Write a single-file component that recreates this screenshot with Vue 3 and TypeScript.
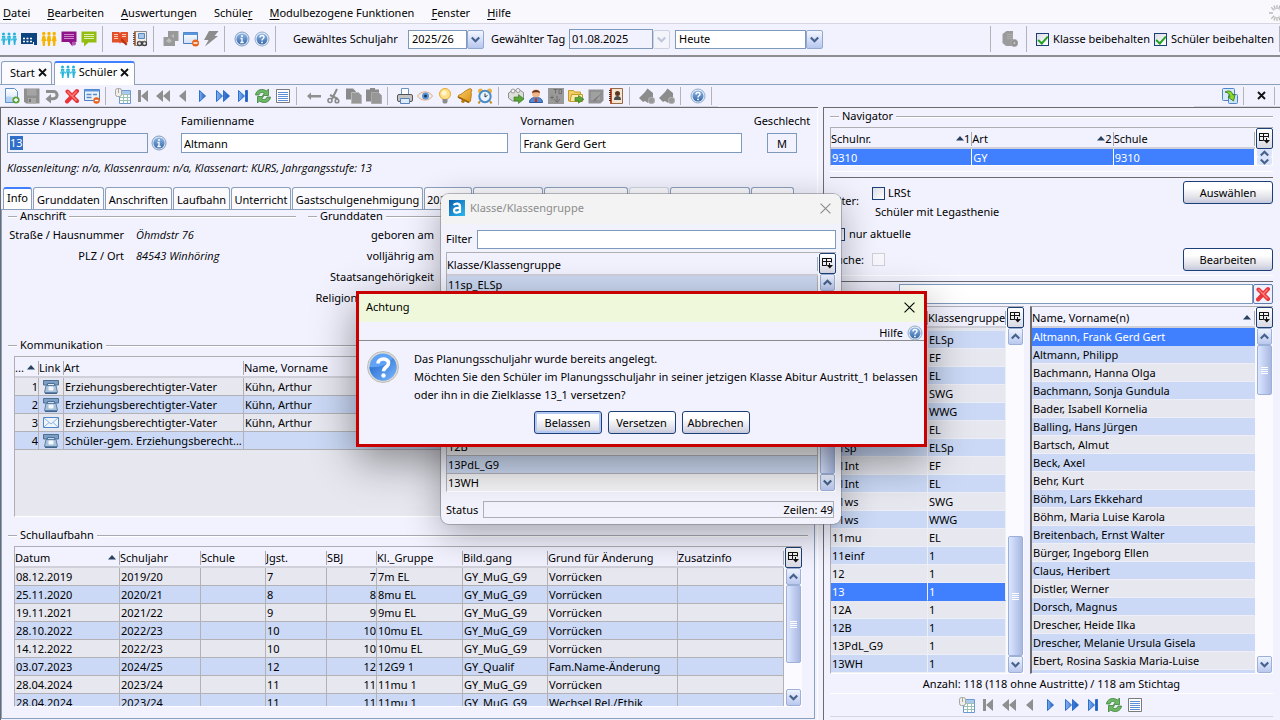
<script setup lang="ts">
import { ref } from 'vue'

interface Tab { label: string; width: number; disabled?: boolean }
interface Column { label: string; width?: number; sort?: string; right?: boolean }

const menus: [string, string, string][] = [
  ['', 'D', 'atei'],
  ['', 'B', 'earbeiten'],
  ['', 'A', 'uswertungen'],
  ['Schüle', 'r', ''],
  ['', 'M', 'odulbezogene Funktionen'],
  ['', 'F', 'enster'],
  ['', 'H', 'ilfe'],
]

const mainTools = [
  ['people-c', 'board', 'people-y', 'screen', 'chat'],
  ['book', 'notebook'],
  ['puzzle', 'window', 'bolt'],
  ['info', 'help'],
]

const editTools = [
  ['new', 'save', 'undo', 'delete', 'form'],
  ['calendar', 'first', 'rewind', 'prev', 'next', 'forward', 'last', 'refresh', 'list'],
  ['back', 'cut', 'copy', 'paste'],
  ['print', 'eye', 'bulb', 'bell', 'clock'],
  ['printout', 'person', 'tb', 'folder', 'note', 'contacts'],
  ['ticket', 'ticket'],
  ['help'],
]
const navTools = editTools[1]

const tabs: Tab[] = [
  { label: 'Info', width: 29 },
  { label: 'Grunddaten', width: 71 },
  { label: 'Anschriften', width: 67 },
  { label: 'Laufbahn', width: 57 },
  { label: 'Unterricht', width: 60 },
  { label: 'Gastschulgenehmigung', width: 131 },
  { label: '2025/26', width: 48 },
  { label: '', width: 70 },
  { label: '', width: 84 },
  { label: '', width: 40, disabled: true },
  { label: '', width: 80 },
  { label: '', width: 43 },
]

const contactCols: Column[] = [
  { label: '...', width: 24, sort: ' ', right: true },
  { label: 'Link', width: 25 },
  { label: 'Art', width: 180 },
  { label: 'Name, Vorname', width: 200 },
  { label: '' },
]
const contacts = [
  { nr: 1, icon: 'phone', art: 'Erziehungsberechtigter-Vater', name: 'Kühn, Arthur' },
  { nr: 2, icon: 'phone', art: 'Erziehungsberechtigter-Vater', name: 'Kühn, Arthur' },
  { nr: 3, icon: 'mail', art: 'Erziehungsberechtigter-Vater', name: 'Kühn, Arthur' },
  { nr: 4, icon: 'phone', art: 'Schüler-gem. Erziehungsberecht...', name: '' },
]

const careerCols: Column[] = [
  { label: 'Datum', width: 105, sort: ' ' },
  { label: 'Schuljahr', width: 81 },
  { label: 'Schule', width: 65 },
  { label: 'Jgst.', width: 61 },
  { label: 'SBJ', width: 50, right: true },
  { label: 'Kl._Gruppe', width: 86 },
  { label: 'Bild.gang', width: 85 },
  { label: 'Grund für Änderung', width: 130 },
  { label: 'Zusatzinfo' },
]
const career = [
  ['08.12.2019', '2019/20', '', '7', '7', '7m EL', 'GY_MuG_G9', 'Vorrücken', ''],
  ['25.11.2020', '2020/21', '', '8', '8', '8mu EL', 'GY_MuG_G9', 'Vorrücken', ''],
  ['19.11.2021', '2021/22', '', '9', '9', '9mu EL', 'GY_MuG_G9', 'Vorrücken', ''],
  ['28.10.2022', '2022/23', '', '10', '10', '10mu EL', 'GY_MuG_G9', 'Vorrücken', ''],
  ['14.12.2022', '2022/23', '', '10', '10', '10mu EL', 'GY_MuG_G9', 'Vorrücken', ''],
  ['03.07.2023', '2024/25', '', '12', '12', '12G9 1', 'GY_Qualif', 'Fam.Name-Änderung', ''],
  ['28.04.2024', '2023/24', '', '11', '11', '11mu 1', 'GY_MuG_G9', 'Vorrücken', ''],
  ['28.04.2024', '2023/24', '', '11', '11', '11mu 1', 'GY_MuG_G9', 'Wechsel Rel./Ethik', ''],
]

const classes = [
  ['10sp', 'ELSp'], ['10Int', 'EF'], ['10Int', 'EL'], ['10ws', 'SWG'], ['10ws', 'WWG'], ['10mu', 'EL'],
  ['11sp', 'ELSp'], ['11Int', 'EF'], ['11Int', 'EL'], ['11ws', 'SWG'], ['11ws', 'WWG'], ['11mu', 'EL'],
  ['11einf', '1'], ['12', '1'], ['13', '1'], ['12A', '1'], ['12B', '1'], ['13PdL_G9', '1'], ['13WH', '1'],
]
const selectedClass = ref('13')

const students = [
  'Altmann, Frank Gerd Gert', 'Altmann, Philipp', 'Bachmann, Hanna Olga', 'Bachmann, Sonja Gundula',
  'Bader, Isabell Kornelia', 'Balling, Hans Jürgen', 'Bartsch, Almut', 'Beck, Axel', 'Behr, Kurt',
  'Böhm, Lars Ekkehard', 'Böhm, Maria Luise Karola', 'Breitenbach, Ernst Walter', 'Bürger, Ingeborg Ellen',
  'Claus, Heribert', 'Distler, Werner', 'Dorsch, Magnus', 'Drescher, Heide Ilka',
  'Drescher, Melanie Ursula Gisela', 'Ebert, Rosina Saskia Maria-Luise', '',
]
const selectedStudent = ref(0)

const groups = [
  '11sp_ELSp', '11Int_EF', '11Int_EL', '11ws_SWG', '11ws_WWG', '11mu_EL',
  '11einf_1', '12', '12A', '12B', '13PdL_G9', '13WH',
]
</script>

<template>
  <svg class="sprite" width="0" height="0" aria-hidden="true">
    <defs>
      <linearGradient id="gBlue" x1="0" y1="0" x2="0" y2="1">
        <stop offset="0" stop-color="#8fb8e8" /><stop offset="1" stop-color="#3567a8" />
      </linearGradient>
      <linearGradient id="gSky" x1="0" y1="0" x2="1" y2="1">
        <stop offset="0" stop-color="#0b5fae" /><stop offset="1" stop-color="#2bb8f0" />
      </linearGradient>
      <linearGradient id="gPaper" x1="0" y1="0" x2="0" y2="1">
        <stop offset="0" stop-color="#ffffff" /><stop offset="1" stop-color="#cfe0f5" />
      </linearGradient>
      <linearGradient id="gPlay" x1="0" y1="0" x2="1" y2="0">
        <stop offset="0" stop-color="#7fb2f0" /><stop offset="1" stop-color="#1557b8" />
      </linearGradient>
      <linearGradient id="gAsk" x1="0" y1="0" x2="1" y2="1">
        <stop offset="0" stop-color="#1c62c8" /><stop offset="1" stop-color="#7ab8ff" />
      </linearGradient>
      <linearGradient id="gGold" x1="0" y1="0" x2="1" y2="1">
        <stop offset="0" stop-color="#fbd36b" /><stop offset="1" stop-color="#d98c12" />
      </linearGradient>
    </defs>
    <symbol id="people-c" viewBox="0 0 16 16">
      <g fill="#23b3d8">
        <circle cx="2.500" cy="3" r="1.500" /><circle cx="8" cy="3" r="1.500" /><circle cx="13.500" cy="3" r="1.500" />
        <path d="M.8 5h3.600L4 9.500 3.400 14H2l-.5-4.500zM6.200 5h3.600l-.4 4.500-.6 4.500H7.400l-.5-4.500zM11.700 5h3.600l-.4 4.500-.6 4.500h-1.400l-.5-4.500z" />
        <path d="M0 9.500L2.500 6.500 5.200 9 8 6.500 10.700 9l2.800-2.500L16 9" fill="none" stroke="#55c6e4" stroke-width="1.300" />
      </g>
    </symbol>
    <symbol id="people-y" viewBox="0 0 16 16">
      <g fill="#f5b400">
        <circle cx="2.800" cy="2.500" r="1.700" /><circle cx="8" cy="2.500" r="1.700" /><circle cx="13.200" cy="2.500" r="1.700" />
        <path d="M1.500 4.500h2.600L5.200 10h-1L3.800 15h-2L1.400 10h-1zM6.700 4.500h2.600L10.400 10h-1L9 15H7L6.600 10h-1zM11.900 4.500h2.600l1.100 5.500h-1l-.4 5h-2l-.4-5h-1z" />
      </g>
    </symbol>
    <symbol id="board" viewBox="0 0 16 16">
      <path d="M0 2h16v12h-3v-3h-1v2H0z" fill="#0d4480" />
      <path d="M2 7.500h9M2 10.500h9" stroke="#fff" stroke-width="1.500" stroke-dasharray="2 1.500" />
    </symbol>
    <symbol id="screen" viewBox="0 0 16 16">
      <path d="M.5.500h15V11h-4v4.500L8 11H.5z" fill="#8f148a" />
      <path d="M3 3.500h10M3 5.500h10M3 7.500h10" stroke="#cf86cc" />
      <circle cx="13" cy="12.500" r="2" fill="#b452b0" />
    </symbol>
    <symbol id="chat" viewBox="0 0 16 16">
      <path d="M.5.500h15v11h-8L3 15.500v-4H.5z" fill="#93bd10" />
      <path d="M3 3.500h10M3 5.500h10M3 7.500h10" stroke="#e2efb4" />
    </symbol>
    <symbol id="book" viewBox="0 0 16 16">
      <path d="M0 1h7l1 1 1-1h7v10l-3 1.500L9 11.500l-1 1-1-1H0z" fill="#e2502a" />
      <path d="M2 3.500h4M2 5.500h4M2 7.500h4M10 3.500h4M10 5.500h4" stroke="#ffc9b8" />
      <path d="M9.500 7l6 6-1.500 1.500L9 9.500z" fill="#b8310e" />
    </symbol>
    <symbol id="notebook" viewBox="0 0 16 16">
      <path d="M2.500.500h12v14h-12z" fill="#f3f0ec" stroke="#8a8a8a" />
      <path d="M2 .5h2v14H2z" fill="#b9714a" />
      <path d="M1 2.500h2M1 4.500h2M1 6.500h2M1 8.500h2M1 10.500h2M1 12.500h2" stroke="#555" />
      <path d="M6.500 2.500h6v5h-6z" fill="#a9c7ec" stroke="#5b87c0" />
      <circle cx="7.500" cy="12.500" r="2" fill="none" stroke="#444" stroke-width="1.300" /><circle cx="12.500" cy="12.500" r="2" fill="none" stroke="#444" stroke-width="1.300" /><path d="M6 10.500h8" stroke="#666" />
    </symbol>
    <symbol id="puzzle" viewBox="0 0 16 16">
      <path d="M5 0h10.500v10H12v5H.5V6H5z" fill="#999" />
      <path d="M3 10l3-3 3 3-3 2zM8 5l3-2v4z" fill="#bbb" />
    </symbol>
    <symbol id="window" viewBox="0 0 16 16">
      <path d="M.5 1.500h14v11H.5z" fill="url(#gPaper)" stroke="#4d7fc0" />
      <path d="M.5 1.500h14v2.500H.5z" fill="#5b95dc" />
      <circle cx="12.500" cy="12" r="3.500" fill="#e8641c" /><path d="M10.500 12h4" stroke="#fff" stroke-width="1.500" />
    </symbol>
    <symbol id="bolt" viewBox="0 0 16 16">
      <path d="M6 0h9.500l-4 5H15L2 15.500 5.500 9H1z" fill="#8c8c8c" />
    </symbol>
    <symbol id="info" viewBox="0 0 16 16">
      <circle cx="8" cy="8" r="7" fill="#dfe9f5" stroke="#7f9cc0" />
      <circle cx="8" cy="8" r="5.600" fill="url(#gBlue)" />
      <circle cx="8" cy="5" r="1" fill="#fff" /><path d="M6.500 7.500H8v3.500M6.300 11.500h3.500" fill="none" stroke="#fff" stroke-width="1.300" />
    </symbol>
    <symbol id="help" viewBox="0 0 16 16">
      <circle cx="8" cy="8" r="7" fill="#e6eef8" stroke="#93acca" />
      <circle cx="8" cy="8" r="5.500" fill="url(#gBlue)" />
      <path d="M6 6.500c0-2.700 4-2.700 4-.2C10 7.800 8 7.700 8 9.400" fill="none" stroke="#fff" stroke-width="1.400" /><circle cx="8" cy="11.400" r=".9" fill="#fff" />
    </symbol>
    <symbol id="new" viewBox="0 0 16 16">
      <path d="M1.500.500h9l3 3v11h-12z" fill="url(#gPaper)" stroke="#5d8fc9" />
      <path d="M2 9c4-1 7 0 11 2v3H2z" fill="#b4d2f3" />
      <circle cx="12" cy="12" r="3.600" fill="#5aa13a" /><path d="M12 10v4M10 12h4" stroke="#fff" stroke-width="1.300" />
    </symbol>
    <symbol id="save" viewBox="0 0 16 16">
      <path d="M0 .5h15.500v15H2l-2-2z" fill="#8f8f8f" /><path d="M3 1h9.500v6.500H3z" fill="#a4a4a4" /><path d="M4 10h8v5.500H4z" fill="#a8a8a8" /><path d="M5 11h2v3H5z" fill="#777" />
    </symbol>
    <symbol id="undo" viewBox="0 0 16 16">
      <path d="M2 3.500h7.500a3.600 3.600 0 0 1 0 7.200H6" fill="none" stroke="#8e8e8e" stroke-width="3" />
      <path d="M7 6v9.500L1.500 11z" fill="#8e8e8e" />
    </symbol>
    <symbol id="delete" viewBox="0 0 16 16">
      <path d="M3.500 3.500l9.500 9.500M13 3L3 13.500" stroke="#e8343a" stroke-width="4" stroke-linecap="round" />
      <path d="M3.500 3.500L12.500 12.500M12.500 3.500L8.500 7.500" stroke="#ff8078" stroke-width="1.400" />
    </symbol>
    <symbol id="form" viewBox="0 0 16 16">
      <path d="M.5 1.500h15v11H.5z" fill="#eaf2fc" stroke="#4d7fc0" /><path d="M.5 1.500h15v2H.5z" fill="#5b95dc" />
      <path d="M2.500 6.500h5M9 6.500h4M2.500 9.500h5" stroke="#5b8ac6" stroke-width="1.400" />
      <circle cx="12.500" cy="12.500" r="3.200" fill="#e8641c" /><path d="M10.800 12.500h3.500" stroke="#fff" stroke-width="1.300" />
    </symbol>
    <symbol id="calendar" viewBox="0 0 16 16">
      <path d="M4.500 2.500h11v13h-11z" fill="#fff" stroke="#6b9ad0" />
      <path d="M5 3h10v3H5z" fill="#a9c8ec" />
      <path d="M5 6.500h10M5 9.500h10M5 12.500h10M8.500 6v9M12.500 6v9" stroke="#9cc3b0" />
      <rect x=".5" y=".5" width="6" height="8" rx="2" fill="#efefea" stroke="#a5a5a0" /><path d="M3.500 1v4" stroke="#a5a5a0" />
    </symbol>
    <symbol id="first" viewBox="0 0 16 16"><path d="M3 2h3v12H3zM13 2v12L6 8z" fill="#8f8f8f" /></symbol>
    <symbol id="rewind" viewBox="0 0 16 16"><path d="M8 2v12L1 8zM15 2v12L8 8z" fill="#8f8f8f" /></symbol>
    <symbol id="prev" viewBox="0 0 16 16"><path d="M11 2v12L4 8z" fill="#8f8f8f" /></symbol>
    <symbol id="next" viewBox="0 0 16 16"><path d="M4.500 2.500l6 5.500-6 5.500z" fill="url(#gPlay)" stroke="#2f6fce" /></symbol>
    <symbol id="forward" viewBox="0 0 16 16"><path d="M1.500 2.500l6 5.500-6 5.500zM8.500 2.500l6 5.500-6 5.500z" fill="url(#gPlay)" stroke="#2f6fce" /></symbol>
    <symbol id="last" viewBox="0 0 16 16"><path d="M3.500 2.500l6 5.500-6 5.500zM10.500 2.500h2v11h-2z" fill="url(#gPlay)" stroke="#2f6fce" /></symbol>
    <symbol id="refresh" viewBox="0 0 16 16">
      <path d="M.5 7C1 1.500 7.500 0 11.500 3L13.500 1v6.500H7.500L9.300 5.200C7 3.800 4.500 4.500 4 7z" fill="#6cb765" stroke="#3d8238" stroke-width=".8" />
      <path d="M15.500 9C15 14.500 8.500 16 4.500 13L2.500 15V8.500h6L6.700 10.800C9 12.200 11.500 11.500 12 9z" fill="#6cb765" stroke="#3d8238" stroke-width=".8" />
    </symbol>
    <symbol id="list" viewBox="0 0 16 16">
      <path d="M1.500 1.500h13v13h-13z" fill="#fff" stroke="#7b7b7b" /><path d="M3 4.500h10M3 6.500h10M3 8.500h10M3 10.500h10M3 12.500h10" stroke="#5c8fd6" />
    </symbol>
    <symbol id="back" viewBox="0 0 16 16"><path d="M1 8l4-3.500V7h10v2.500H5V12z" fill="#8f8f8f" /></symbol>
    <symbol id="cut" viewBox="0 0 16 16">
      <path d="M11 1L6 11M4 7l8 4" stroke="#8a8a8a" stroke-width="2" /><circle cx="4" cy="12.500" r="2" fill="none" stroke="#8a8a8a" stroke-width="1.600" /><circle cx="11" cy="13" r="1.800" fill="none" stroke="#8a8a8a" stroke-width="1.600" />
    </symbol>
    <symbol id="copy" viewBox="0 0 16 16"><path d="M0 .5h7l3 3v8H0z" fill="#8a8a8a" /><path d="M5.500 4.500h7l3 3v8h-10z" fill="#979797" stroke="#b9b9b9" /></symbol>
    <symbol id="paste" viewBox="0 0 16 16"><path d="M0 1.500h4V0h5v1.500h4v12H0z" fill="#8a8a8a" /><path d="M5.500 4.500h7l3 3v8h-10z" fill="#979797" stroke="#a9a9a9" /></symbol>
    <symbol id="print" viewBox="0 0 16 16">
      <path d="M4.500.500h7v6h-7z" fill="#fff" stroke="#6a94c8" /><rect x=".5" y="6.500" width="15" height="7" rx="1.500" fill="#c4c4c4" stroke="#555" />
      <path d="M3.500 10.500h9v5h-9z" fill="#dcebfb" stroke="#5d83b4" />
    </symbol>
    <symbol id="eye" viewBox="0 0 16 16">
      <path d="M.5 8C4 2.500 12 2.500 15.500 8 12 13.500 4 13.500.500 8z" fill="#f2ede8" stroke="#d8ab89" /><circle cx="8.500" cy="8" r="3.500" fill="#5b93d6" /><circle cx="8.500" cy="8" r="1.600" fill="#183a68" />
    </symbol>
    <symbol id="bulb" viewBox="0 0 16 16">
      <circle cx="8" cy="6" r="5.500" fill="#fde08a" stroke="#e9a727" /><path d="M5.500 11h5v3l-1 1.500h-3L5.500 14z" fill="#8c8c8c" /><circle cx="7" cy="5" r="2.500" fill="#fff6cf" />
    </symbol>
    <symbol id="bell" viewBox="0 0 16 16">
      <path d="M11 1.500l2.500-1 1.500 1.500-1 2c1 3-.5 6.500-.5 9L12 14.500 1 9l.5-1.700C5 6.500 7.500 3 11 1.500z" fill="url(#gGold)" stroke="#b9770c" stroke-width=".9" />
      <path d="M1 9l11 5.500" stroke="#9a5f08" stroke-width="1.400" /><circle cx="6" cy="13.300" r="1.700" fill="#b9770c" />
    </symbol>
    <symbol id="clock" viewBox="0 0 16 16">
      <path d="M3 13l-1.500 2.500M13 13l1.500 2.500" stroke="#c48f2a" stroke-width="2" /><circle cx="3.500" cy="3" r="2.500" fill="#e9b23b" /><circle cx="12.500" cy="3" r="2.500" fill="#e9b23b" />
      <circle cx="8" cy="8.500" r="5.700" fill="#e9f3fd" stroke="#4a8ccb" stroke-width="2" /><path d="M8 5.500V9l2.500-1.500" fill="none" stroke="#333" />
    </symbol>
    <symbol id="printout" viewBox="0 0 16 16">
      <path d="M.5 5l4-2.500h8l3 2V11l-3 2h-8l-4-3z" fill="#dededc" stroke="#8f8f8c" /><circle cx="5" cy="3" r="2" fill="#f3f3f3" stroke="#999" /><circle cx="10" cy="2.500" r="2" fill="#f3f3f3" stroke="#999" />
      <path d="M6 9h4.500V6.500L16 11l-5.500 4.500V13H6z" fill="#57a637" stroke="#35741c" stroke-width=".6" />
    </symbol>
    <symbol id="person" viewBox="0 0 16 16">
      <path d="M1.500 14.500c0-4 3-5 6.500-5s6.500 1 6.500 5z" fill="#4f8ad0" stroke="#2a5b9c" /><circle cx="8" cy="5.500" r="4" fill="#f0b487" /><path d="M4 5C4 1 12 1 12 5 10 3.800 6 4 4 5z" fill="#6b3315" /><path d="M7.300 10h1.400l.6 4h-2.600z" fill="#d42a1c" />
    </symbol>
    <symbol id="tb" viewBox="0 0 16 16">
      <path d="M0 0h16v16H0z" fill="#999" /><path d="M5.500 1.500h4M7.500 1.500v4M11 1.500h2.500v4H11zM9 8v6M6 11l3 3.500 3-3.500M2 9.500h4M4 7.500v4" fill="none" stroke="#6e6e6e" />
    </symbol>
    <symbol id="folder" viewBox="0 0 16 16">
      <path d="M.5 2.500h5l1 1.500h6v9H.5z" fill="#f1cf63" stroke="#c49a2c" /><path d="M3.500 6.500h11v7H2z" fill="#fbe8a4" stroke="#c49a2c" />
      <path d="M7 9.500h3.500V7.500L16 11.300l-5.500 3.900V13H7z" fill="#57a637" stroke="#35741c" stroke-width=".6" />
    </symbol>
    <symbol id="note" viewBox="0 0 16 16"><path d="M.5 1.500h15v11l-3 3H.5z" fill="#919191" /><path d="M3 4h9v8H3z" fill="#a0a0a0" /><path d="M14 5L7 13l-1.500.5.500-2z" fill="#777" /></symbol>
    <symbol id="contacts" viewBox="0 0 16 16">
      <path d="M2.500.500h12v15h-12z" fill="#f5e6d4" stroke="#9b6b48" /><path d="M2 .5h2v15H2z" fill="#c6491f" /><path d="M1 2.500h2M1 4.500h2M1 6.500h2M1 8.500h2M1 10.500h2M1 12.500h2" stroke="#333" />
      <circle cx="9.500" cy="5.500" r="2.500" fill="#5d3921" /><path d="M6 12c0-3 1.500-4 3.500-4s3.500 1 3.500 4z" fill="#4c4c4c" />
    </symbol>
    <symbol id="ticket" viewBox="0 0 16 16">
      <path d="M0 10l6-6 2.500-3.500L14 5v4l-3 3-2 3-3-2-2 1z" fill="#8c8c8c" /><circle cx="12.500" cy="12.500" r="3.200" fill="#999" stroke="#b5b5b5" />
    </symbol>
    <symbol id="stack" viewBox="0 0 16 16">
      <path d="M.5 3l4-3H11v11l1 4H4L.5 12z" fill="#9b9b9b" /><path d="M5 3.500h6M5 5.500h6M5 7.500h6" stroke="#adadad" /><circle cx="12.300" cy="12" r="3.500" fill="#8d8d8d" stroke="#aaa" />
      <path d="M12.300 10.500v3M10.800 12h3" stroke="#c5c5c5" />
    </symbol>
    <symbol id="export" viewBox="0 0 16 16">
      <rect x=".5" y=".5" width="12" height="12" rx="1" fill="#d9e9fa" stroke="#4d87c8" /><rect x="6.500" y="6.500" width="9" height="9" rx="1" fill="#cfe3f8" stroke="#4d87c8" />
      <path d="M3 4c4-2 7-1 8 3l2-.5-1.500 6.500L6 9l2-.5C7.500 6 6 4.500 3 4z" fill="#8fd62b" stroke="#2f7d14" stroke-width=".9" />
    </symbol>
    <symbol id="phone" viewBox="0 0 16 16">
      <path d="M.5 1.500h15V6h-4V4.500h-7V6h-4z" fill="#7d9fc4" stroke="#4d7095" /><path d="M3 6.500h10l1.500 7h-13z" fill="#a9c2dc" stroke="#5d80a6" /><path d="M2 14.500h12" stroke="#42648a" /><rect x="5.500" y="7.500" width="5" height="4" rx="1" fill="#f4f8fc" />
    </symbol>
    <symbol id="mail" viewBox="0 0 16 16"><path d="M.5 2.500h15v10H.5z" fill="#eef5fd" stroke="#4d87c8" /><path d="M1 3l7 6 7-6M1 12l5-4.500M15 12L10 7.500" fill="none" stroke="#8fb2dc" /></symbol>
    <symbol id="down" viewBox="0 0 9 7"><path d="M.8 1.500l3.700 3.700 3.700-3.700" fill="none" stroke="#46628c" stroke-width="2.200" /></symbol>
    <symbol id="up" viewBox="0 0 9 7"><path d="M.8 5.500l3.700-3.700 3.700 3.700" fill="none" stroke="#46628c" stroke-width="2.200" /></symbol>
    <symbol id="cross" viewBox="0 0 10 10"><path d="M.5.500l9 9M9.500.500l-9 9" fill="none" stroke="currentColor" /></symbol>
    <symbol id="crossb" viewBox="0 0 9 9"><path d="M1 1l7 7M8 1L1 8" fill="none" stroke="#111" stroke-width="1.800" /></symbol>
    <symbol id="cols" viewBox="0 0 11 11">
      <path d="M.5.500h9v4M.5 0v8M0 7.500h4.500M0 3.500h9M4.500 1v6.500M7.500 5v3" fill="none" stroke="#111" /><path d="M4.500 7H11L7.800 10.500z" fill="#111" />
    </symbol>
    <symbol id="sort" viewBox="0 0 8 5"><path d="M0 4.500L4 0l4 4.500z" fill="#27415f" /></symbol>
    <symbol id="busy" viewBox="0 0 16 16">
      <g stroke="#b9b9b9" stroke-width="1.300">
        <path d="M8 0v4M8 12v4M0 8h4M12 8h4M2.300 2.300l2.900 2.900M10.800 10.800l2.900 2.900M13.700 2.300l-2.900 2.900M5.200 10.800l-2.900 2.900M5 .6l1.400 3.700M11 .6L9.600 4.300M5 15.400l1.400-3.700M11 15.400l-1.400-3.700" />
      </g>
    </symbol>
    <symbol id="logo" viewBox="0 0 16 16">
      <path d="M0 0h16v16H0z" fill="url(#gSky)" /><path d="M4.500 5c2-2 6.500-2 6.500 1.500V13M11 8C7 7.500 5 8.500 5 10.500c0 2.500 4 3 6 .3" fill="none" stroke="#fff" stroke-width="2.200" />
    </symbol>
    <symbol id="question" viewBox="0 0 32 32">
      <circle cx="16" cy="16" r="15.500" fill="#dcdad4" stroke="#c0beb8" /><circle cx="16" cy="16" r="13.500" fill="#5fa2f6" />
      <path d="M2.500 16C10 17 20 15 26 7a13.500 13.500 0 1 1-23.500 9z" fill="url(#gAsk)" />
      <path d="M11 12.500c0-6 10.500-6 10.500-.3 0 3.800-5 3.800-5 8" fill="none" stroke="#fff" stroke-width="3.600" /><circle cx="16.500" cy="24.500" r="2.200" fill="#fff" />
    </symbol>
  </svg>

  <div class="app">
    <nav class="menubar">
      <a v-for="m in menus" :key="m[1] + m[2]" href="#">{{ m[0] }}<u>{{ m[1] }}</u>{{ m[2] }}</a>
      <svg class="ic busy"><use href="#busy" /></svg>
    </nav>

    <div class="toolbar main-tools">
      <div v-for="(group, g) in mainTools" :key="g" class="tool-group">
        <button v-for="(name, i) in group" :key="i" class="tool" :aria-label="name"><svg class="ic"><use :href="'#' + name" /></svg></button>
      </div>
      <label class="lbl" for="year">Gewähltes Schuljahr</label>
      <span class="combo year"><select id="year"><option>2025/26</option></select><span class="arrow"><svg><use href="#down" /></svg></span></span>
      <label class="lbl day-label" for="day">Gewählter Tag</label>
      <input id="day" class="day" value="01.08.2025" readonly />
      <button class="arrow off" disabled aria-label="Kalender"><svg><use href="#down" /></svg></button>
      <span class="combo today"><select aria-label="Stichtag"><option>Heute</option></select><span class="arrow"><svg><use href="#down" /></svg></span></span>
      <div class="keep">
        <button class="tool" aria-label="Daten"><svg class="ic"><use href="#stack" /></svg></button>
        <i class="vline"></i>
        <label><input type="checkbox" checked />Klasse beibehalten</label>
        <label><input type="checkbox" checked />Schüler beibehalten</label>
      </div>
    </div>

    <div class="docs">
      <div class="doc"><a href="#">Start</a><button aria-label="Start schließen"><svg><use href="#crossb" /></svg></button></div>
      <div class="doc active"><svg class="ic"><use href="#people-c" /></svg><a href="#">Schüler</a><button aria-label="Schüler schließen"><svg><use href="#crossb" /></svg></button></div>
    </div>

    <div class="toolbar edit-tools">
      <div class="tool-set">
        <div v-for="(group, g) in editTools" :key="g" class="tool-group">
          <button v-for="(name, i) in group" :key="i" class="tool" :aria-label="name"><svg class="ic"><use :href="'#' + name" /></svg></button>
        </div>
      </div>
      <div class="tool-set end">
        <div class="tool-group"><button class="tool" aria-label="Übernehmen"><svg class="ic"><use href="#export" /></svg></button></div>
        <button class="tool close-doc" aria-label="Schließen"><svg><use href="#crossb" /></svg></button>
        <i class="vline"></i>
      </div>
    </div>

    <main class="work">
      <section class="pupil">
        <div class="head">
          <div class="field">
            <label for="klasse">Klasse / Klassengruppe</label>
            <div class="line"><div id="klasse" class="box ro"><mark>13</mark></div><svg class="ic"><use href="#info" /></svg></div>
          </div>
          <div class="field"><label for="fam">Familienname</label><input id="fam" value="Altmann" /></div>
          <div class="field"><label for="vor">Vornamen</label><input id="vor" value="Frank Gerd Gert" /></div>
          <div class="field sex"><label for="sex">Geschlecht</label><input id="sex" value="M" readonly /></div>
        </div>
        <p class="hint">Klassenleitung: n/a, Klassenraum: n/a, Klassenart: KURS, Jahrgangsstufe: 13</p>

        <div class="tabs" role="tablist">
          <button v-for="(t, i) in tabs" :key="i" role="tab" :class="{ on: i === 0 }" :disabled="t.disabled" :style="{ width: t.width + 'px' }">{{ t.label }}</button>
        </div>

        <div class="sheet">
          <div class="facts">
            <div class="group">
              <h3>Anschrift</h3>
              <dl>
                <dt>Straße / Hausnummer</dt><dd>Öhmdstr 76</dd>
                <dt>PLZ / Ort</dt><dd>84543 Winhöring</dd>
              </dl>
            </div>
            <div class="group">
              <h3>Grunddaten</h3>
              <dl class="base">
                <dt>geboren am</dt><dd></dd>
                <dt>volljährig am</dt><dd></dd>
                <dt>Staatsangehörigkeit</dt><dd></dd>
                <dt>Religionszugehörigkeit</dt><dd></dd>
              </dl>
            </div>
          </div>

          <div class="group grow">
            <h3>Kommunikation</h3>
            <div class="grid">
              <div class="clip">
                <table>
                  <colgroup><col v-for="c in contactCols" :key="c.label" :style="c.width ? { width: c.width + 'px' } : {}" /></colgroup>
                  <thead><tr><th v-for="c in contactCols" :key="c.label"><span>{{ c.label }}<svg v-if="c.sort" class="sort"><use href="#sort" /></svg></span></th></tr></thead>
                  <tbody>
                    <tr v-for="r in contacts" :key="r.nr">
                      <td class="num">{{ r.nr }}</td><td class="pic"><svg class="ic"><use :href="'#' + r.icon" /></svg></td><td>{{ r.art }}</td><td>{{ r.name }}</td><td></td>
                    </tr>
                  </tbody>
                </table>
              </div>
              <div class="side"><button class="pick" aria-label="Spalten"><svg><use href="#cols" /></svg></button></div>
            </div>
          </div>

          <div class="group grow">
            <h3>Schullaufbahn</h3>
            <div class="grid">
              <div class="clip">
                <table>
                  <colgroup><col v-for="c in careerCols" :key="c.label" :style="c.width ? { width: c.width + 'px' } : {}" /></colgroup>
                  <thead><tr><th v-for="c in careerCols" :key="c.label"><span>{{ c.label }}<svg v-if="c.sort" class="sort"><use href="#sort" /></svg></span></th></tr></thead>
                  <tbody>
                    <tr v-for="(r, i) in career" :key="i"><td v-for="(v, j) in r" :key="j" :class="{ num: careerCols[j].right }">{{ v }}</td></tr>
                  </tbody>
                </table>
              </div>
              <div class="side">
                <button class="pick" aria-label="Spalten"><svg><use href="#cols" /></svg></button>
                <button class="sb" aria-label="Nach oben"><svg><use href="#up" /></svg></button>
                <div class="track career-track"><i class="thumb"></i></div>
                <button class="sb" aria-label="Nach unten"><svg><use href="#down" /></svg></button>
              </div>
            </div>
          </div>
        </div>
      </section>

      <section class="navi">
        <h3>Navigator</h3>
        <div class="grid school">
          <div class="clip">
            <table>
              <thead><tr>
                <th><span>Schulnr.<b><svg class="sort"><use href="#sort" /></svg>1</b></span></th>
                <th><span>Art<b><svg class="sort"><use href="#sort" /></svg>2</b></span></th>
                <th><span>Schule</span></th>
              </tr></thead>
              <tbody><tr class="sel"><td>9310</td><td>GY</td><td>9310</td></tr></tbody>
            </table>
          </div>
          <div class="side">
            <button class="pick" aria-label="Spalten"><svg><use href="#cols" /></svg></button>
            <button class="sb half" aria-label="Nach oben"><svg><use href="#up" /></svg></button>
            <button class="sb half" aria-label="Nach unten"><svg><use href="#down" /></svg></button>
          </div>
        </div>
        <hr />
        <div class="filters">
          <div class="frow first">
            <span class="cap">Filter:</span>
            <div class="opts">
              <label><input type="checkbox" />LRSt</label>
              <span>Schüler mit Legasthenie</span>
            </div>
            <button class="btn">Auswählen</button>
          </div>
          <label class="current"><input type="checkbox" />nur aktuelle</label>
          <div class="frow">
            <label class="cap" for="such">Suche:</label>
            <input id="such" type="checkbox" disabled />
            <button class="btn">Bearbeiten</button>
          </div>
        </div>
        <hr class="tight" />
        <div class="search"><input type="text" aria-label="Schnellsuche" /><button class="clear" aria-label="Leeren"><svg class="ic"><use href="#delete" /></svg></button></div>

        <div class="lists">
          <div class="grid classes">
            <div class="clip">
              <table>
                <thead><tr><th><span>Klasse</span></th><th><span>Klassengruppe</span></th></tr></thead>
                <tbody>
                  <tr v-for="(c, i) in classes" :key="i" :class="{ sel: c[0] === selectedClass }" @click="selectedClass = c[0]"><td>{{ c[0] }}</td><td>{{ c[1] }}</td></tr>
                </tbody>
              </table>
            </div>
            <div class="side">
              <button class="pick" aria-label="Spalten"><svg><use href="#cols" /></svg></button>
              <button class="sb" aria-label="Nach oben"><svg><use href="#up" /></svg></button>
              <div class="track low"><i class="thumb"></i></div>
              <button class="sb" aria-label="Nach unten"><svg><use href="#down" /></svg></button>
            </div>
          </div>
          <div class="grid students">
            <div class="clip">
              <table>
                <thead><tr><th><span>Name, Vorname(n)<svg class="sort"><use href="#sort" /></svg></span></th></tr></thead>
                <tbody><tr v-for="(s, i) in students" :key="i" :class="{ sel: i === selectedStudent }" @click="selectedStudent = i"><td>{{ s }}</td></tr></tbody>
              </table>
            </div>
            <div class="side">
              <button class="pick" aria-label="Spalten"><svg><use href="#cols" /></svg></button>
              <button class="sb" aria-label="Nach oben"><svg><use href="#up" /></svg></button>
              <div class="track student-track"><i class="thumb"></i></div>
              <button class="sb" aria-label="Nach unten"><svg><use href="#down" /></svg></button>
            </div>
          </div>
        </div>
        <p class="count">Anzahl: 118 (118 ohne Austritte) / 118 am Stichtag</p>
        <div class="pager">
          <button v-for="n in navTools" :key="n" class="tool" :aria-label="n"><svg class="ic"><use :href="'#' + n" /></svg></button>
        </div>
      </section>
    </main>

    <div class="dialog" role="dialog" aria-label="Klasse/Klassengruppe">
      <header><svg class="ic"><use href="#logo" /></svg><h2>Klasse/Klassengruppe</h2><button aria-label="Schließen"><svg><use href="#cross" /></svg></button></header>
      <div class="dfilter"><label for="df">Filter</label><input id="df" type="text" /></div>
      <div class="grid groups">
        <div class="clip">
          <table>
            <thead><tr><th><span>Klasse/Klassengruppe</span></th></tr></thead>
            <tbody><tr v-for="g in groups" :key="g"><td>{{ g }}</td></tr></tbody>
          </table>
        </div>
        <div class="side">
          <button class="pick" aria-label="Spalten"><svg><use href="#cols" /></svg></button>
          <button class="sb" aria-label="Nach oben"><svg><use href="#up" /></svg></button>
          <div class="track group-track"><i class="thumb"></i></div>
          <button class="sb" aria-label="Nach unten"><svg><use href="#down" /></svg></button>
        </div>
      </div>
      <div class="status"><span>Status</span><output>Zeilen: 49</output></div>
    </div>

    <div class="alert" role="alertdialog" aria-label="Achtung">
      <header><h2>Achtung</h2><button aria-label="Schließen"><svg><use href="#cross" /></svg></button></header>
      <div class="helpbar"><a href="#">Hilfe</a><svg class="ic"><use href="#help" /></svg></div>
      <div class="message">
        <svg><use href="#question" /></svg>
        <p>Das Planungsschuljahr wurde bereits angelegt.<br />Möchten Sie den Schüler im Planungsschuljahr in seiner jetzigen Klasse Abitur Austritt_1 belassen<br />oder ihn in die Zielklasse 13_1 versetzen?</p>
      </div>
      <div class="actions">
        <button class="btn focus">Belassen</button>
        <button class="btn">Versetzen</button>
        <button class="btn">Abbrechen</button>
      </div>
    </div>
  </div>
</template>

<style>
html, body, #app { height: 100%; margin: 0; }
</style>

<style scoped>
* { box-sizing: border-box; }
.sprite { position: absolute; }
.app {
  position: relative; display: flex; flex-direction: column; height: 100%; min-height: 0; overflow: hidden;
  background: #f2f2ff; color: #000; font: 11px/16px "Noto Sans", "Open Sans", sans-serif;
}
a { color: inherit; text-decoration: none; }
button, input, select { font: inherit; color: inherit; margin: 0; padding: 0; border-radius: 0; outline: none; }
button { background: none; border: 0; display: flex; align-items: center; justify-content: center; flex: none; }
h2, h3, p, dl, dd { margin: 0; font-weight: normal; font-size: inherit; }
svg { display: block; flex: none; }
.ic { width: 16px; height: 16px; }

.menubar { display: flex; align-items: center; gap: 17px; height: 24px; flex: none; padding: 2px 0 0 3px; background: #f9f9fd; border-bottom: 1px solid #d6d6e2; }
.menubar u { text-underline-offset: 2px; }
.busy { margin-left: auto; margin-right: -5px; }

.toolbar { display: flex; align-items: center; flex: none; }
.main-tools { height: 33px; padding: 0 0 1px 1px; border-bottom: 2px solid #8c8c92; }
.edit-tools { height: 22px; justify-content: space-between; }
.tool-set { display: flex; align-items: center; height: 22px; padding: 0 6px 0 4px; border-bottom: 1px solid #d6d6e2; }
.tool-set.end { padding: 0 5px 0 28px; }
.tool-group { display: flex; align-items: center; gap: 4px; padding-right: 5px; margin-right: 9px; border-right: 1px solid #b4b4b8; height: 26px; }
.edit-tools .tool-group { height: 18px; }
.tool-set .tool-group:last-of-type { margin-right: 0; }
.tool { width: 16px; height: 16px; }
.vline { width: 1px; height: 26px; background: #b4b4b8; }
.edit-tools .vline { height: 18px; }
.tool.close-doc { width: 30px; padding-left: 4px; }
.close-doc svg { width: 9px; height: 9px; }
.lbl { margin-left: 8px; width: 106px; white-space: nowrap; }
.day-label { margin-left: 7px; width: 78px; }
.combo { display: flex; height: 19px; }
.combo select { appearance: none; flex: 1; min-width: 0; padding-left: 3px; border: 1px solid #7d9abd; background: #fff; height: 19px; }
.year { width: 76px; margin-left: 9px; }
.today { width: 148px; margin-left: 5px; }
.arrow { width: 17px; height: 19px; display: flex; align-items: center; justify-content: center; border: 1px solid #93a8ce; border-radius: 2px; background: linear-gradient(#f4f7ff, #b6c6ee); }
.arrow svg { width: 9px; height: 7px; }
.arrow.off { background: #f4f4fb; border-color: #cdd2e2; }
.arrow.off svg { opacity: .3; }
.day { width: 84px; height: 20px; padding-left: 2px; border: 1px solid #7d9abd; background: #f2f2ff; margin-bottom: 1px; }
.keep { display: flex; align-items: center; margin-left: auto; padding: 0 5px 0 11px; border-left: 1px solid #b4b4b8; border-right: 1px solid #b4b4b8; height: 26px; gap: 4px; white-space: nowrap; }
.keep .vline { margin: 0 5px 0 4px; }
label { white-space: nowrap; }
.keep label, .current { display: flex; align-items: center; gap: 4px; }
.opts label { display: flex; align-items: center; gap: 3px; }
input[type="checkbox"] { appearance: none; width: 13px; height: 13px; flex: none; border: 1px solid #1c3f77; background: linear-gradient(135deg, #dcdce4, #fff); display: flex; justify-content: center; }
input[type="checkbox"]:disabled { border-color: #cfcfda; background: #f6f6fc; }
input[type="checkbox"]:checked::after { content: ""; width: 4px; height: 8px; border: solid #21a121; border-width: 0 2px 2px 0; transform: rotate(42deg); }

.docs { display: flex; align-items: flex-end; gap: 2px; height: 28px; flex: none; padding-left: 1px; border-bottom: 1px solid #8ba0bc; }
.doc { display: flex; align-items: center; gap: 3px; height: 23px; padding: 0 4px 1px 8px; background: #fbfbff; border: 1px solid #8ba0bc; border-bottom: 0; border-radius: 3px 3px 0 0; }
.doc.active { height: 24px; margin-bottom: -1px; padding: 0 5px 4px; border-top: 2px solid #4080ff; background: #fff; }
.doc svg:not(.ic) { width: 9px; height: 9px; }

.work { flex: 1; min-height: 0; display: grid; grid-template-columns: minmax(0, 1fr) 457px; gap: 5px; }
.pupil { display: flex; flex-direction: column; min-height: 0; min-width: 0; border: solid #6c6c70; border-width: 1px 0 0 1px; box-shadow: inset -1px 0 #fff; }
.head { display: grid; grid-template-columns: 162px minmax(0, 328fr) minmax(0, 222fr) 56px; gap: 12px; padding: 5px 8px 0 6px; }
.field { display: flex; flex-direction: column; gap: 4px; min-width: 0; }
.field input, .box { height: 20px; border: 1px solid #7d9abd; background: #fff; padding: 0 2px; width: 100%; }
.field .line { display: flex; align-items: center; gap: 3px; }
.box.ro { background: #f2f2ff; width: 141px; padding: 2px; line-height: 14px; }
mark { background: #2f6fca; color: #fff; display: inline-block; }
.field.sex { align-items: center; }
.field.sex input { width: 30px; background: #f2f2ff; text-align: center; }
.hint { font-family: "Open Sans", "Noto Sans", sans-serif; font-style: italic; padding: 7px 6px 11px; white-space: nowrap; }
.tabs { display: flex; gap: 1px; padding-left: 2px; flex: none; overflow: hidden; }
.tabs button { height: 22px; border: 1px solid #8ba0bc; border-bottom: 0; border-radius: 3px 3px 0 0; background: #fbfbff; padding-top: 3px; white-space: nowrap; }
.tabs button.on { border-top: 2px solid #4080ff; padding: 0 0 3px; background: #fff; }
.tabs button:disabled { border-color: #cfd4e2; }

.sheet { flex: 1; min-height: 0; display: flex; flex-direction: column; padding: 0 6px 11px; border: 1px solid #8ba0bc; margin: 0 3px 1px 0; }
h3 { display: flex; align-items: center; gap: 3px; height: 12px; line-height: 12px; flex: none; }
h3::before, h3::after { content: ""; height: 1px; background: #a9a9b2; box-shadow: 0 1px #fff; }
h3::before { width: 9px; }
h3::after { flex: 1; }
.facts { display: grid; grid-template-columns: 288px minmax(0, 1fr); gap: 12px; height: 129px; flex: none; }
dl { display: grid; grid-template-columns: 116px 1fr; column-gap: 12px; grid-auto-rows: 21px; line-height: 21px; padding-top: 2px; white-space: nowrap; }
dl.base { grid-template-columns: 126px 1fr; }
dt { text-align: right; justify-self: end; }
dd { font-family: "Open Sans", "Noto Sans", sans-serif; font-style: italic; }
.grow { flex: 1; min-height: 0; display: flex; flex-direction: column; }
.grow + .grow { margin-top: 12px; }
.grow .grid { flex: 1; margin: 5px 6px 0; }

.grid { display: flex; min-height: 0; border: solid #aeaeb4; border-width: 1px 0 0 1px; border-bottom: 1px solid #fff; background: #e7e7f0; }
.clip { flex: 1; min-width: 0; overflow: hidden; }
table { width: 100%; table-layout: fixed; border-collapse: separate; border-spacing: 0; }
th { height: 21px; padding: 0; font-weight: normal; text-align: left; border-bottom: 2px solid #d0d0da; background: linear-gradient(#a9a9b2, #a9a9b2) right 0 top 4px / 1px 14px no-repeat, #f2f2ff; }
th span { display: flex; align-items: center; justify-content: space-between; padding: 2px 4px 0 0; line-height: 16px; height: 19px; overflow: hidden; white-space: nowrap; }
th b { display: flex; align-items: center; font-weight: normal; margin-right: -2px; }
.sort { width: 8px; height: 5px; }
td { height: 18px; line-height: 17px; padding: 0 1px; border: solid #b2b2b6; border-width: 0 1px 1px 0; white-space: nowrap; overflow: hidden; background: #e7e7f0; }
tr:nth-child(even) td { background: #cbd9f6; }
td.num { text-align: right; padding: 0; }
td.pic { padding: 0 4px; }
.side { width: 18px; display: flex; flex-direction: column; align-items: center; flex: none; background: #fbfbff; }
.pick { width: 17px; height: 21px; border: 1px solid #1c3f77; border-radius: 2px; background: linear-gradient(#fff, #d9d9e4); }
.pick svg { width: 11px; height: 11px; }
.sb { width: 15px; height: 17px; border: 1px solid #9db0d8; border-radius: 2px; background: linear-gradient(#eef3ff, #b9c8ee); }
.sb svg { width: 9px; height: 7px; }
.track { flex: 1; display: flex; flex-direction: column; width: 15px; min-height: 0; }
.thumb { display: block; height: 78px; border: 1px solid #9db0d8; border-radius: 2px; background: repeating-linear-gradient(#fff 0 1px, transparent 1px 2px) center / 7px 7px no-repeat, linear-gradient(90deg, #dbe6ff, #a9b8e2); }

.navi { display: flex; flex-direction: column; min-height: 0; border: solid #6c6c70; border-width: 1px 0 0 1px; padding: 2px 7px 3px 6px; }
.school { flex: none; height: 39px; margin-top: 5px; }
.sb.half { height: 8px; border: 0; background: #dbe4fa; }
.sb.half svg { width: 9px; height: 7px; }
.sel td, tr.sel:nth-child(even) td { background: #4080ff; color: #fff; border-color: #fff; border-bottom-color: #4080ff; }
hr { width: 100%; flex: none; height: 7px; margin: 5px 0 0; border: 0; border-top: 1px solid #fff; border-bottom: 1px solid #6c6c70; }
hr.tight { margin-top: 4px; }
.filters { flex: none; height: 93px; padding-top: 3px; }
.frow { display: flex; align-items: center; }
.cap { width: 42px; flex: none; }
.first { height: 42px; align-items: flex-start; }
.first .cap { padding-top: 12px; }
.opts { line-height: 16px; display: flex; flex-direction: column; gap: 3px; padding-top: 4px; }
.opts span { padding-left: 3px; }
.current { height: 16px; padding-left: 2px; margin: 3px 0 6px; }
.btn { height: 23px; width: 90px; margin-left: auto; border: 1px solid #1c3f77; border-radius: 3px; background: linear-gradient(#fff 30%, #dcdce6 80%, #c4c8dc); }
.search { display: flex; flex: none; height: 20px; padding-left: 69px; margin-top: 2px; }
.search input { flex: 1; min-width: 0; border: 1px solid #7d9abd; background: #fff; }
.clear { width: 20px; border: 1px solid #5b7db0; border-radius: 2px; background: #eef1fb; }
.lists { flex: 1; min-height: 0; display: grid; grid-template-columns: 194px minmax(0, 1fr); gap: 6px; margin-top: 2px; }
.lists td { border-color: transparent; border-bottom: 1px solid #eeeef6; padding: 0 2px 0 1px; }
.lists .sel td { border-bottom-color: #4080ff; }
.classes th:first-child { width: 97px; }
.classes thead::after { content: ""; display: block; height: 3px; }
.classes td { border-right-color: #eeeef6; }
.classes tr:nth-child(odd) td { background: #cbd9f6; }
.classes tr:nth-child(even) td { background: #e7e7f0; }
.classes tr.sel:nth-child(odd) td { background: #4080ff; }
.classes th span { padding-right: 1px; }
.students { border-left-color: #6c6c70; border-left-width: 2px; }
.students .thumb { height: 50px; }
.low { justify-content: flex-end; }
.low .thumb { height: 120px; }
.count { text-align: center; flex: none; height: 20px; line-height: 19px; border-bottom: 1px solid #fff; }
.pager { display: flex; justify-content: center; gap: 5px; align-items: center; height: 23px; flex: none; border-bottom: 1px solid #d6d6e2; padding-right: 2px; }

.dialog { position: absolute; left: 441px; top: 194px; width: 400px; height: 330px; display: flex; flex-direction: column; border-radius: 8px; background: #f2f2fc; box-shadow: 0 0 0 1px rgba(120, 120, 130, .5), 0 10px 36px rgba(0, 0, 0, .32); overflow: hidden; }
.dialog header { display: flex; align-items: center; height: 30px; padding: 0 10px 2px 8px; background: #f3f3f3; color: #8c8c8c; }
.dialog h2 { margin-left: 5px; flex: 1; }
header svg:not(.ic) { width: 11px; height: 11px; }
.dfilter { display: flex; align-items: center; gap: 5px; margin: 5px 5px 0; height: 20px; }
.dfilter input { flex: 1; height: 19px; border: 1px solid #7d9abd; background: #fff; }
.groups { margin: 3px 5px 0; height: 240px; background: #f2f2f4; }
.groups td { background: #f2f2f4; }
.groups tr:nth-child(even) td { background: #f2f2f4; }
.groups tr:nth-child(odd) td { background: #ccd9f2; }
.groups th { height: 23px; }
.groups .track { justify-content: flex-end; }
.status { display: flex; align-items: center; gap: 5px; margin: 9px 7px 0 5px; }
.status output { flex: 1; height: 17px; line-height: 16px; border: 1px solid #aeaeb4; text-align: right; overflow: hidden; }

.alert { position: absolute; left: 356px; top: 291px; width: 571px; border: 3px solid #c80000; background: #f2f2ff; box-shadow: 0 14px 40px rgba(0, 0, 0, .42); padding-bottom: 10px; }
.alert header { display: flex; align-items: center; justify-content: space-between; height: 28px; padding: 0 9px 2px 7px; background: #eff8da; }
.helpbar { display: flex; align-items: center; justify-content: flex-end; gap: 4px; height: 19px; padding: 3px 1px 0; border-bottom: 1px solid #8c8c8c; }
.message { display: flex; gap: 15px; padding: 9px 8px 0; }
.message svg { width: 32px; height: 32px; margin-top: 1px; }
.message p { line-height: 18px; white-space: nowrap; }
.actions { display: flex; justify-content: center; gap: 6px; margin-top: 7px; }
.actions .btn { width: 68px; height: 23px; margin: 0; }
.btn.focus { box-shadow: inset 0 0 0 2px #b4c8f4; }
</style>
